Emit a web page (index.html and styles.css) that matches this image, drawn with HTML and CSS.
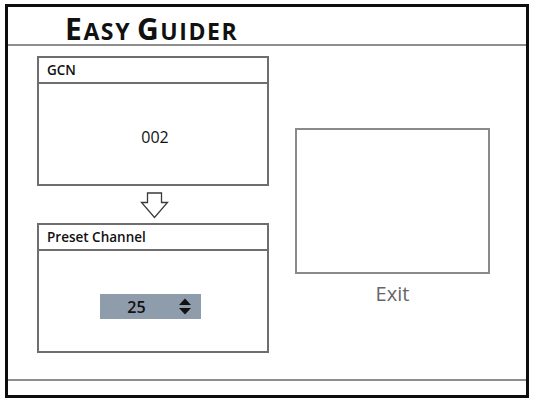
FILE: index.html
```html
<!DOCTYPE html>
<html>
<head>
<meta charset="utf-8">
<link rel="stylesheet" href="styles.css">
</head>
<body>
<div class="frame">
  <div class="header"><span class="title"><span class="cap">E</span><span class="sc">asy</span> <span class="cap">G</span><span class="sc">uider</span></span></div>
  <div class="content">
    <div class="left">
      <div class="panel">
        <div class="panel-head">GCN</div>
        <div class="panel-body gcn-body"><span class="gcn-value">002</span></div>
      </div>
      <div class="arrow-row">
        <svg class="arrow" width="29" height="28" viewBox="0 0 29 28">
          <path d="M7.5 1 H21.5 V10.5 H27.5 L14.5 25.5 L1.5 10.5 H7.5 Z" fill="#fff" stroke="#3a3a3a" stroke-width="1.3" stroke-linejoin="miter"/>
        </svg>
      </div>
      <div class="panel">
        <div class="panel-head">Preset Channel</div>
        <div class="panel-body preset-body">
          <div class="spinner">
            <span class="spin-value">25</span>
            <svg class="spin-icon" width="12" height="17" viewBox="0 0 12 17">
              <polygon points="0,7 6,0.5 12,7" fill="#111"/>
              <polygon points="0,10 12,10 6,16.5" fill="#111"/>
            </svg>
          </div>
        </div>
      </div>
    </div>
    <div class="right">
      <div class="preview"></div>
      <div class="exit">Exit</div>
    </div>
  </div>
  <div class="footer"></div>
</div>
</body>
</html>
```

FILE: styles.css
```css
html, body {
  margin: 0;
  padding: 0;
  background: #fff;
}
body {
  font-family: "Open Sans", "DejaVu Sans", sans-serif;
  color: #111;
}
.frame {
  margin: 4px 0 0 5px;
  width: 524px;
  height: 394px;
  box-sizing: border-box;
  border: 3px solid #0d0d0d;
  display: flex;
  flex-direction: column;
}
.header {
  height: 39px;
  box-sizing: border-box;
  padding: 7px 0 0 57px;
  border-bottom: 2px solid #8e8e8e;
}
.title {
  font-family: "Open Sans", sans-serif;
  font-weight: 700;
  line-height: 29px;
  letter-spacing: 1.6px;
  color: #111;
  display: block;
  white-space: nowrap;
}
.cap {
  font-size: 30px;
}
.sc {
  font-size: 23px;
  text-transform: uppercase;
}
.content {
  flex: 1;
  display: flex;
  padding: 10px 0 0 29px;
}
.left {
  width: 232px;
  display: flex;
  flex-direction: column;
}
.panel {
  height: 130px;
  box-sizing: border-box;
  border: 2px solid #6e6e6e;
  display: flex;
  flex-direction: column;
}
.panel-head {
  height: 26px;
  box-sizing: border-box;
  padding: 0 0 0 8px;
  border-bottom: 2px solid #6e6e6e;
  font-size: 13.5px;
  font-weight: 600;
  line-height: 24px;
  color: #111;
}
.panel-body {
  flex: 1;
  display: flex;
}
.gcn-body {
  align-items: center;
  justify-content: center;
  padding-top: 6px;
  box-sizing: border-box;
}
.gcn-value {
  font-size: 16px;
  font-weight: 400;
  padding-left: 4px;
}
.arrow-row {
  height: 37px;
  box-sizing: border-box;
  padding: 6px 0 0 103px;
}
.arrow {
  display: block;
}
.preset-body {
  align-items: center;
  padding-top: 11px;
  padding-left: 61px;
  box-sizing: border-box;
}
.spinner {
  width: 101px;
  height: 25px;
  background: #8e9cab;
  display: flex;
  align-items: center;
}
.spin-value {
  width: 73px;
  text-align: center;
  font-size: 16px;
  font-weight: 600;
  color: #111;
}
.spin-icon {
  margin-left: 6px;
  display: block;
}
.right {
  margin-left: 26px;
  padding-top: 72px;
  width: 195px;
}
.preview {
  height: 146px;
  box-sizing: border-box;
  border: 2px solid #8a8a8a;
}
.exit {
  margin-top: 6px;
  text-align: center;
  font-size: 20px;
  color: #666;
}
.footer {
  height: 16px;
  box-sizing: border-box;
  border-top: 2px solid #8e8e8e;
}
```
